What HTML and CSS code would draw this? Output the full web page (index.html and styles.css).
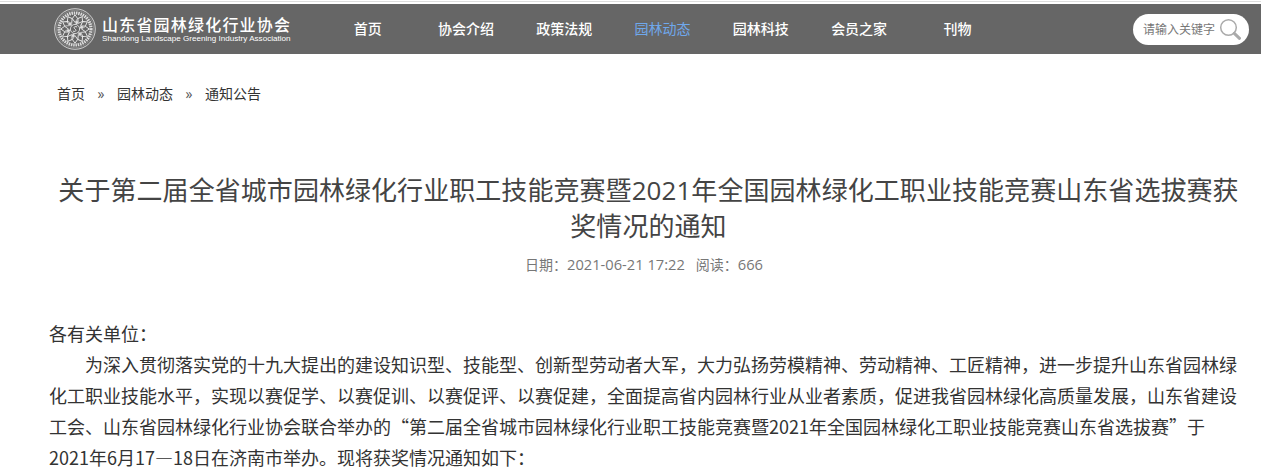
FILE: index.html
```html
<!DOCTYPE html>
<html lang="zh-CN">
<head>
<meta charset="utf-8">
<title>通知公告</title>
<link rel="stylesheet" href="styles.css">
</head>
<body>
<div class="top-rule"></div>
<header class="site-header">
  <a class="brand">
    <svg class="brand-mark" viewBox="0 0 42 42" width="42" height="42" aria-hidden="true">
      <circle cx="21" cy="21" r="20.300" fill="none" stroke="#ddd" stroke-width=".9"/>
      <circle cx="21" cy="21" r="18.700" fill="none" stroke="#aaa" stroke-width=".5"/>
      <circle cx="21" cy="21" r="16" fill="none" stroke="#ddd" stroke-width="3.200" stroke-dasharray="1.500 .8"/>
      <defs>
        <path id="petal" d="M21 6.800l2.700 3.800-2.700 3.800-2.700-3.800z" fill="none" stroke="#eee" stroke-width=".9"/>
        <path id="petal2" d="M21 11.500l2 2.700-2 2.700-2-2.700z" fill="#ddd" stroke="#666" stroke-width=".3"/>
      </defs>
      <use href="#petal"/>
      <use href="#petal" transform="rotate(30 21 21)"/>
      <use href="#petal" transform="rotate(60 21 21)"/>
      <use href="#petal" transform="rotate(90 21 21)"/>
      <use href="#petal" transform="rotate(120 21 21)"/>
      <use href="#petal" transform="rotate(150 21 21)"/>
      <use href="#petal" transform="rotate(180 21 21)"/>
      <use href="#petal" transform="rotate(210 21 21)"/>
      <use href="#petal" transform="rotate(240 21 21)"/>
      <use href="#petal" transform="rotate(270 21 21)"/>
      <use href="#petal" transform="rotate(300 21 21)"/>
      <use href="#petal" transform="rotate(330 21 21)"/>
      <use href="#petal2" transform="rotate(15 21 21)"/>
      <use href="#petal2" transform="rotate(75 21 21)"/>
      <use href="#petal2" transform="rotate(135 21 21)"/>
      <use href="#petal2" transform="rotate(195 21 21)"/>
      <use href="#petal2" transform="rotate(255 21 21)"/>
      <use href="#petal2" transform="rotate(315 21 21)"/>
      <circle cx="21" cy="21" r="4.600" fill="#666" stroke="#eee" stroke-width=".8"/>
      <path d="M18.900 23c2.200 1.200 4.200-.3 2.100-2s-.2-3.100 2.100-2" fill="none" stroke="#eee" stroke-width="1"/>
    </svg>
    <span class="brand-text">
      <span class="brand-cn">山东省园林绿化行业协会</span>
      <span class="brand-en">Shandong Landscape Greening Industry Association</span>
    </span>
  </a>
  <nav class="main-nav">
    <a>首页</a>
    <a>协会介绍</a>
    <a>政策法规</a>
    <a class="active">园林动态</a>
    <a>园林科技</a>
    <a>会员之家</a>
    <a>刊物</a>
  </nav>
  <div class="search">
    <span class="search-text">请输入关键字</span>
    <svg class="search-icon" viewBox="0 0 22 22" width="22" height="22" aria-hidden="true">
      <circle cx="9.500" cy="9.500" r="7.800" fill="none" stroke="#aaa" stroke-width="1.500"/>
      <path d="M15.300 15.300l5.200 5" fill="none" stroke="#aaa" stroke-width="3" stroke-linecap="round"/>
    </svg>
  </div>
</header>

<div class="crumbs">
  <a>首页</a><span class="sep">»</span><a>园林动态</a><span class="sep">»</span><a>通知公告</a>
</div>

<article class="article">
  <h1>关于第二届全省城市园林绿化行业职工技能竞赛暨2021年全国园林绿化工职业技能竞赛山东省选拔赛获奖情况的通知</h1>
  <p class="meta">日期：<span class="num">2021-06-21 17:22</span>&nbsp;&nbsp;&nbsp;阅读：<span class="num">666</span></p>
  <div class="body">
    <p>各有关单位：</p>
    <p class="indent">为深入贯彻落实党的十九大提出的建设知识型、技能型、创新型劳动者大军，大力弘扬劳模精神、劳动精神、工匠精神，进一步提升山东省园林绿化工职业技能水平，实现以赛促学、以赛促训、以赛促评、以赛促建，全面提高省内园林行业从业者素质，促进我省园林绿化高质量发展，山东省建设工会、山东省园林绿化行业协会联合举办的“第二届全省城市园林绿化行业职工技能竞赛暨2021年全国园林绿化工职业技能竞赛山东省选拔赛”于2021年6月17—18日在济南市举办。现将获奖情况通知如下：</p>
  </div>
</article>
</body>
</html>
```
FILE: styles.css
```css
* { box-sizing: border-box; }
html, body { margin: 0; padding: 0; height: 100%; overflow: hidden; }
body {
  background: #fff;
  font-family: "Open Sans", "Noto Sans CJK SC", sans-serif;
  color: #333;
  padding-top: 1px;
}
.top-rule { height: 1px; background: #ddd; margin-bottom: 2px; }
.site-header {
  height: 50px;
  background: #666;
  display: flex;
  align-items: center;
  padding-left: 54px;
}
.brand { display: flex; align-items: center; gap: 6px; width: 264.500px; flex: none; }
.brand-mark { flex: none; }
.brand-text { display: flex; flex-direction: column; color: #fff; }
.brand-cn { font-family: "Noto Sans CJK SC", sans-serif; font-size: 16px; font-weight: 500; line-height: 20px; letter-spacing: 1.200px; white-space: nowrap; }
.brand-en { font-family: "Liberation Sans", sans-serif; font-size: 8.100px; line-height: 10px; white-space: nowrap; }
.main-nav { display: flex; flex: none; }
.main-nav a { width: 98.300px; text-align: center; color: #fff; font-size: 14px; font-weight: 500; line-height: 50px; }
.main-nav a.active { color: #6fa8ec; font-weight: 400; }
.search {
  margin-left: auto;
  margin-right: 12px;
  width: 116px; height: 31px;
  background: #fff;
  border-radius: 16px;
  display: flex; align-items: center;
  padding-left: 10px;
  gap: 4px;
  flex: none;
}
.search-text { font-size: 12px; color: #777; white-space: nowrap; }
.search-icon { flex: none; }
.crumbs {
  margin: 31px 0 0 57px;
  display: flex;
  font-size: 14px;
  line-height: 18px;
  color: #333;
}
.crumbs .sep { width: 32px; text-align: center; color: #555; }
.article { padding: 0 22px 0 49px; }
h1 {
  margin: 69px 0 0;
  padding-left: 9px;
  font-size: 26px;
  line-height: 36px;
  font-weight: normal;
  letter-spacing: .06px;
  text-align: center;
  color: #444;
}
.meta { margin: 10px 0 0; text-align: center; font-size: 14px; line-height: 20px; color: #777; }
.meta .num { font-size: 14.700px; }
.body { margin-top: 43px; font-family: "Noto Sans CJK SC", sans-serif; font-size: 18px; line-height: 31px; color: #333; }
.body p { margin: 0; }
.body .indent { text-indent: 36px; }
```
